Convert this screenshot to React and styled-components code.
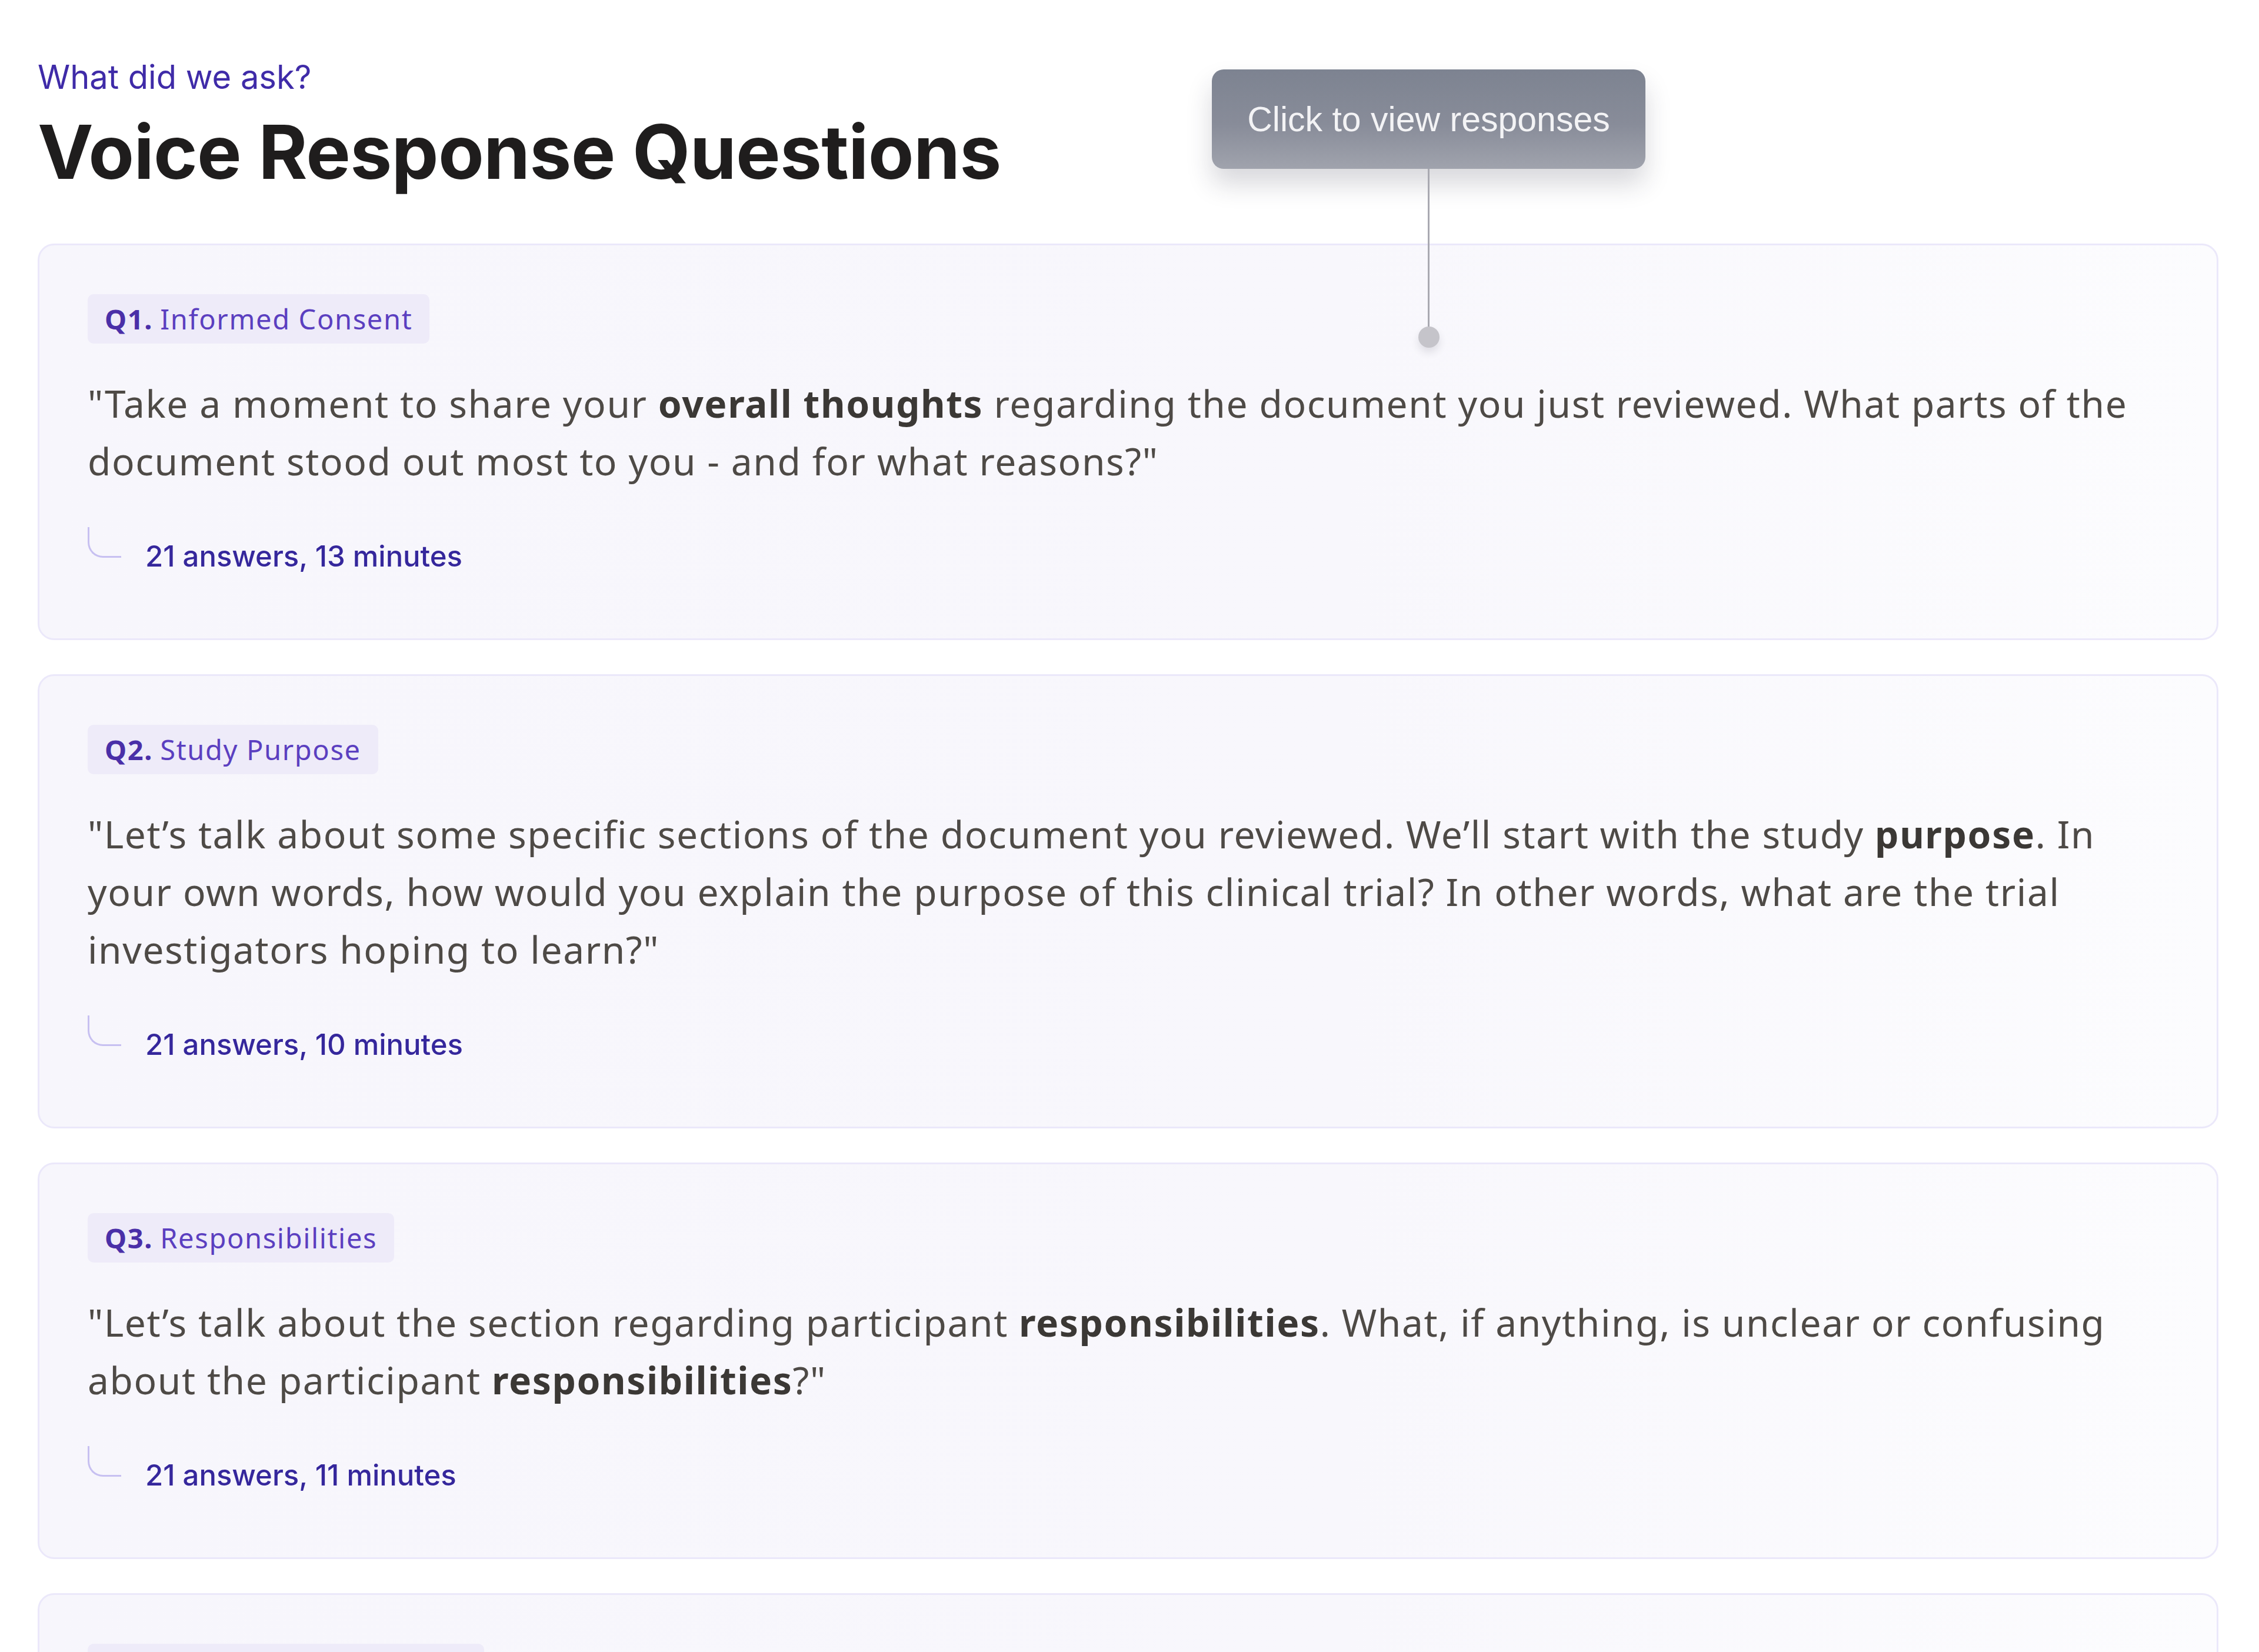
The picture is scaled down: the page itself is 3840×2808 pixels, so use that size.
import React from 'react'
import styled, { createGlobalStyle } from 'styled-components'

const GlobalStyle = createGlobalStyle`
  body {
    margin: 0;
    background: #ffffff;
  }
`

const Page = styled.div`
  position: relative;
  padding: 98px 69px 0 64px;
`

const Eyebrow = styled.div`
  font-family: Inter, "Liberation Sans", sans-serif;
  font-size: 56px;
  line-height: 67px;
  color: #3f2ba8;
`

const Title = styled.h1`
  margin: 23px 0 0;
  font-family: Inter, "Liberation Sans", sans-serif;
  font-weight: 700;
  font-size: 127px;
  line-height: 140px;
  letter-spacing: -0.006em;
  color: #1f1d1d;
`

const List = styled.div`
  display: flex;
  flex-direction: column;
  gap: 58px;
  margin-top: 86px;
`

const Card = styled.div`
  border: 3px solid #ebe8fa;
  border-radius: 28px;
  background: linear-gradient(90deg, #f7f6fc 0%, #f8f7fc 60%, #fcfcfe 100%);
  padding: 83px 82px 109px;
`

const Badge = styled.div`
  display: inline-flex;
  align-items: center;
  height: 84px;
  padding: 0 29px;
  border-radius: 10px;
  background: #eeebf9;
  font-family: "Noto Sans", sans-serif;
  font-size: 47px;
  letter-spacing: 0.035em;
  color: #5b3fc0;

  b {
    font-weight: 700;
    color: #4a2fa8;
    margin-right: 12px;
  }
`

const Question = styled.p`
  margin: 53px 0 0;
  font-family: "Noto Sans", sans-serif;
  font-size: 64px;
  line-height: 98px;
  letter-spacing: 0.025em;
  color: #4e4a46;

  strong {
    font-weight: 700;
    color: #3b3835;
  }
`

const Meta = styled.div`
  display: flex;
  align-items: flex-end;
  margin-top: 63px;
`

const Elbow = styled.span`
  box-sizing: border-box;
  width: 57px;
  height: 52px;
  margin-bottom: 28px;
  border-left: 3px solid #c7c0f1;
  border-bottom: 3px solid #c7c0f1;
  border-bottom-left-radius: 26px;
`

const MetaText = styled.span`
  margin-left: 41px;
  font-family: Inter, "Liberation Sans", sans-serif;
  font-weight: 500;
  font-size: 49px;
  line-height: 60px;
  color: #35279c;
`

const Hint = styled.div`
  position: absolute;
  left: 2060px;
  top: 118px;
  width: 737px;
  display: flex;
  flex-direction: column;
  align-items: center;
`

const Bubble = styled.div`
  box-sizing: border-box;
  width: 100%;
  height: 169px;
  display: flex;
  align-items: center;
  justify-content: center;
  border-radius: 20px;
  background: linear-gradient(180deg, #7d8391 0%, #888c99 55%, #a0a3ad 100%);
  box-shadow: 0 26px 44px rgba(40, 40, 60, 0.18);
  font-family: "Liberation Sans", Inter, sans-serif;
  font-size: 59px;
  color: #f3f3f5;
`

const Stem = styled.span`
  width: 3px;
  height: 272px;
  background: #a9a9b1;
`

const Dot = styled.span`
  width: 36px;
  height: 36px;
  margin-top: -4px;
  border-radius: 50%;
  background: #c5c4ca;
  box-shadow: 0 8px 14px rgba(40, 40, 60, 0.12);
`

const questions = [
  {
    n: 'Q1.',
    label: 'Informed Consent',
    parts: [
      '"Take a moment to share your ',
      { b: 'overall thoughts' },
      ' regarding the document you just reviewed. What parts of the document stood out most to you - and for what reasons?"',
    ],
    meta: '21 answers, 13 minutes',
  },
  {
    n: 'Q2.',
    label: 'Study Purpose',
    parts: [
      '"Let’s talk about some specific sections of the document you reviewed. We’ll start with the study ',
      { b: 'purpose' },
      '. In your own words, how would you explain the purpose of this clinical trial? In other words, what are the trial investigators hoping to learn?"',
    ],
    meta: '21 answers, 10 minutes',
  },
  {
    n: 'Q3.',
    label: 'Responsibilities',
    parts: [
      '"Let’s talk about the section regarding participant ',
      { b: 'responsibilities' },
      '. What, if anything, is unclear or confusing about the participant ',
      { b: 'responsibilities' },
      '?"',
    ],
    meta: '21 answers, 11 minutes',
  },
  {
    n: 'Q4.',
    label: 'Risks and Discomforts',
    parts: [
      '"Next, let’s look at the section describing the ',
      { b: 'risks' },
      ' of taking part. Which of these risks, if any, would make you hesitate to join this trial?"',
    ],
    meta: '21 answers, 12 minutes',
  },
]

const App = () => {
  return (
    <>
      <GlobalStyle />
      <Page>
        <Eyebrow>What did we ask?</Eyebrow>
        <Title>Voice Response Questions</Title>
        <List>
          {questions.map((q) => (
            <Card key={q.n}>
              <Badge>
                <b>{q.n}</b>
                {q.label}
              </Badge>
              <Question>
                {q.parts.map((p, i) =>
                  typeof p === 'string' ? p : <strong key={i}>{p.b}</strong>
                )}
              </Question>
              <Meta>
                <Elbow />
                <MetaText>{q.meta}</MetaText>
              </Meta>
            </Card>
          ))}
        </List>
        <Hint>
          <Bubble>Click to view responses</Bubble>
          <Stem />
          <Dot />
        </Hint>
      </Page>
    </>
  )
}

export default App
